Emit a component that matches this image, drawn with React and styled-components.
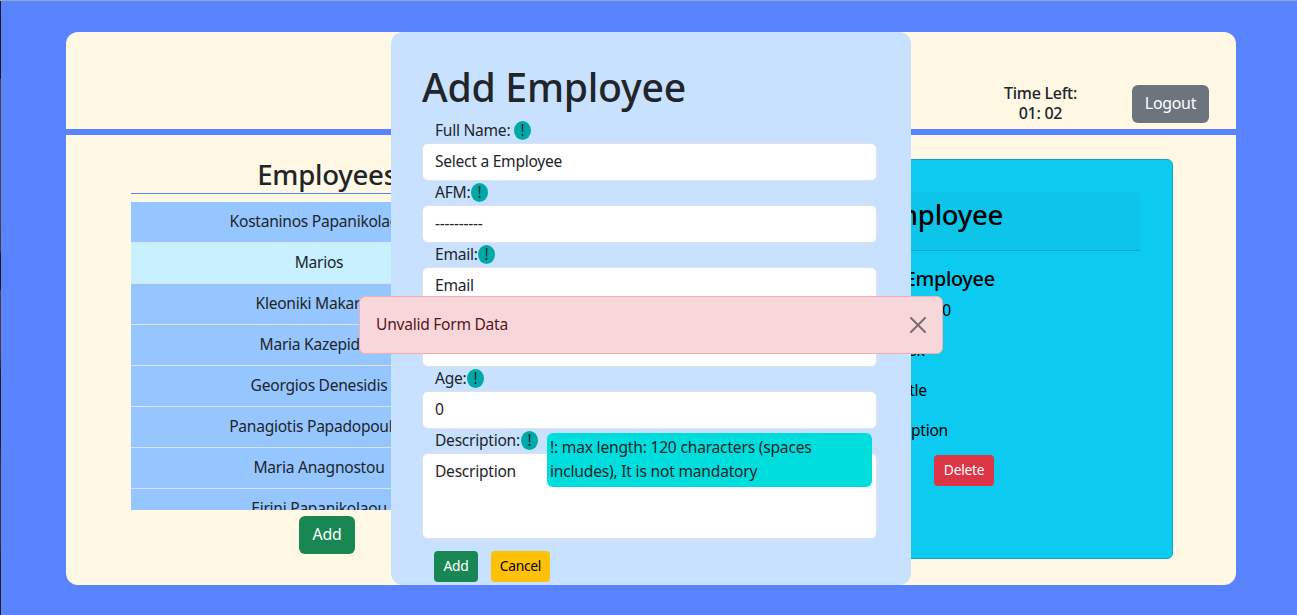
import React from 'react';
import styled, { createGlobalStyle } from 'styled-components';

const Global = createGlobalStyle`
  *, *::before, *::after { box-sizing: border-box; }
  html, body { margin: 0; height: 100%; overflow: hidden; }
  body {
    background: #5983ff;
    color: #212529;
    font: 400 15.6px/24px 'Noto Sans', 'Open Sans', sans-serif;
    letter-spacing: -0.27px;
  }
  h1, h2, h3, p { margin: 0; font-weight: 500; }
  button, input, textarea { font: inherit; color: inherit; letter-spacing: inherit; }
`;

const Page = styled.div`
  position: relative;
  width: 1297px;
  height: 615px;
  padding: 31px 61px 30px 66px;
  border-top: 1px solid #8aabb8;
  background: linear-gradient(
      #1b1b1e 0 78px,
      #45474b 78px 200px,
      #4a3f3c 230px,
      #3c4038 251px,
      #1b1b1e 252px 288px,
      #4d3d33 290px 350px,
      #1f1d1e 375px 440px,
      #33332f 460px 540px,
      #232323 560px
    ) 0 0 / 1px 100% no-repeat;
`;

const Shell = styled.div`
  width: 1170px;
  height: 553px;
  border-radius: 12px;
  background: #fff8e5;
  overflow: hidden;
`;

const Header = styled.header`
  display: flex;
  justify-content: flex-end;
  align-items: flex-start;
  gap: 54px;
  height: 103px;
  padding: 53px 27px 0 0;
  border-bottom: 6px solid #5983ff;
`;

const Timer = styled.div`
  width: 75px;
  margin-top: -2px;
  text-align: center;
  font-weight: 500;
  font-size: 16px;
  line-height: 20px;
  white-space: nowrap;
`;

const Button = styled.button`
  display: inline-flex;
  align-items: center;
  justify-content: center;
  flex: none;
  padding: 0 0 ${(p) => (p.$small ? 2 : 0)}px;
  border: 0;
  width: ${(p) => p.$w}px;
  height: ${(p) => (p.$small ? 31 : 38)}px;
  border-radius: ${(p) => (p.$small ? 4 : 6)}px;
  font-size: ${(p) => (p.$small ? 13.8 : 15.9)}px;
  line-height: 1;
  background: ${(p) => p.$bg};
  color: ${(p) => p.$fg || '#fff'};
`;

const Columns = styled.main`
  display: flex;
  justify-content: space-between;
  padding: 24px 63px 0 65px;
`;

const ListColumn = styled.section`
  width: 392px;
  display: flex;
  flex-direction: column;
  align-items: center;
`;

const ListTitle = styled.h2`
  width: 100%;
  height: 35px;
  font-size: 27.6px;
  line-height: 31px;
  text-align: center;
  border-bottom: 1px solid #5983ff;
  margin-bottom: 8px;
`;

const List = styled.ul`
  width: 100%;
  height: 308px;
  margin: 0 0 6px;
  padding: 0;
  list-style: none;
  overflow: hidden;
`;

const Item = styled.li`
  height: 41px;
  padding: 7px 16px 0 0;
  line-height: 24px;
  text-align: center;
  white-space: nowrap;
  border-bottom: 1px solid #dee2e6;
  background: ${(p) => (p.$active ? '#c8f0ff' : '#96c6ff')};
`;

const Card = styled.section`
  width: 522px;
  height: 400px;
  padding: 32px;
  border: 1px solid #0da6c4;
  border-radius: 6px;
  background: #0dcaf0;
  color: #000;
  text-align: center;
`;

const CardHeader = styled.h2`
  height: 59px;
  font-size: 27.5px;
  line-height: 46px;
  background: rgba(33, 37, 41, 0.03);
  border-bottom: 1px solid #0da6c4;
  border-radius: 6px 6px 0 0;
`;

const CardName = styled.h3`
  margin-top: 16px;
  font-size: 19.8px;
  line-height: 24px;
`;

const CardLine = styled.p`
  margin-top: ${(p) => p.$top ?? 16}px;
  padding-right: ${(p) => p.$inset ?? 0}px;
  font-weight: 400;
`;

const CardActions = styled.div`
  display: flex;
  justify-content: center;
  gap: 44px;
  margin-top: 13px;
`;

const Modal = styled.form`
  position: absolute;
  left: 391px;
  top: 31px;
  width: 520px;
  height: 553px;
  padding: 31px 34px 0 31px;
  border-radius: 12px;
  background: #c8e1ff;
`;

const ModalTitle = styled.h1`
  font-size: 39.2px;
  line-height: 48px;
  margin-bottom: 8px;
  white-space: nowrap;
`;

const Label = styled.label`
  display: flex;
  align-items: center;
  height: 24px;
  padding: 0 0 2px 13px;
  gap: ${(p) => p.$gap || 0}px;
`;

const LabelText = styled.span`
  width: ${(p) => p.$w}px;
  line-height: 22px;
  white-space: nowrap;
`;

const Hint = styled.span`
  width: 17px;
  height: 19px;
  border-radius: 50%;
  background: #00a9a9;
  line-height: 18px;
  text-align: center;
`;

const Fields = styled.div`
  display: flex;
  flex-direction: column;
`;

const Field = styled.div`
  height: ${(p) => p.$h || 38}px;
  padding: 5px 12px;
  border: 1px solid #dee2e6;
  border-radius: 6px;
  background: #fff;
  line-height: 24px;
`;

const FormActions = styled.div`
  display: flex;
  gap: 13px;
  padding: 12px 0 0 12px;
`;

const Tooltip = styled.div`
  position: absolute;
  left: 547px;
  top: 432px;
  width: 325px;
  height: 54px;
  padding: 2px 3px;
  border-radius: 6px;
  background: #00dddd;
  letter-spacing: -0.21px;
`;

const Alert = styled.div`
  position: absolute;
  left: 359px;
  top: 295px;
  width: 584px;
  height: 58px;
  padding: 0 16px;
  display: flex;
  align-items: center;
  justify-content: space-between;
  border: 1px solid #f1aeb5;
  border-radius: 6px;
  background: #f8d7da;
  color: #58151c;
`;

const AlertText = styled.span`
  padding-bottom: 2px;
`;

const employees = [
  'Kostaninos Papanikolaou',
  'Marios',
  'Kleoniki Makariou',
  'Maria Kazepidou',
  'Georgios Denesidis',
  'Panagiotis Papadopoulos',
  'Maria Anagnostou',
  'Eirini Papanikolaou',
];

const fields = [
  { label: 'Full Name:', w: 75, gap: 4, value: 'Select a Employee' },
  { label: 'AFM:', w: 36, value: '----------' },
  { label: 'Email:', w: 43, value: 'Email' },
  { label: '', w: 64, value: '' },
  { label: 'Age:', w: 32, value: '0' },
  { label: 'Description:', w: 86, value: 'Description', h: 86 },
];

export default function App() {
  return (
    <>
      <Global />
      <Page>
        <Shell>
          <Header>
            <Timer>
              Time Left:
              <br />
              01: 02
            </Timer>
            <Button $w={77} $bg="#6c757d">Logout</Button>
          </Header>
          <Columns>
            <ListColumn>
              <ListTitle>Employees</ListTitle>
              <List>
                {employees.map((name, i) => (
                  <Item key={name} $active={i === 1}>{name}</Item>
                ))}
              </List>
              <Button $w={56} $bg="#198754">Add</Button>
            </ListColumn>
            <Card>
              <CardHeader>Edit Employee</CardHeader>
              <CardName>Select a Employee</CardName>
              <CardLine $top={7}>000000000</CardLine>
              <CardLine $inset={6}>Task</CardLine>
              <CardLine>Title</CardLine>
              <CardLine $inset={9}>Description</CardLine>
              <CardActions>
                <Button $small $w={60} $bg="#0d6efd">Edit</Button>
                <Button $small $w={60} $bg="#dc3545">Delete</Button>
              </CardActions>
            </Card>
          </Columns>
        </Shell>
        <Modal>
          <ModalTitle>Add Employee</ModalTitle>
          <Fields>
            {fields.map((f) => (
              <React.Fragment key={f.label}>
                <Label $gap={f.gap}>
                  <LabelText $w={f.w}>{f.label}</LabelText>
                  {f.label && <Hint>!</Hint>}
                </Label>
                <Field $h={f.h}>{f.value}</Field>
              </React.Fragment>
            ))}
          </Fields>
          <FormActions>
            <Button type="button" $small $w={44} $bg="#198754">Add</Button>
            <Button type="button" $small $w={59} $bg="#ffc107" $fg="#000">Cancel</Button>
          </FormActions>
        </Modal>
        <Tooltip>!: max length: 120 characters (spaces includes), It is not mandatory</Tooltip>
        <Alert>
          <AlertText>Unvalid Form Data</AlertText>
          <svg width="16" height="16" viewBox="0 0 16 16" fill="none" stroke="#7c6c6d" strokeWidth="2" strokeLinecap="round">
            <path d="M1 1L15 15M15 1L1 15" />
          </svg>
        </Alert>
      </Page>
    </>
  );
}
